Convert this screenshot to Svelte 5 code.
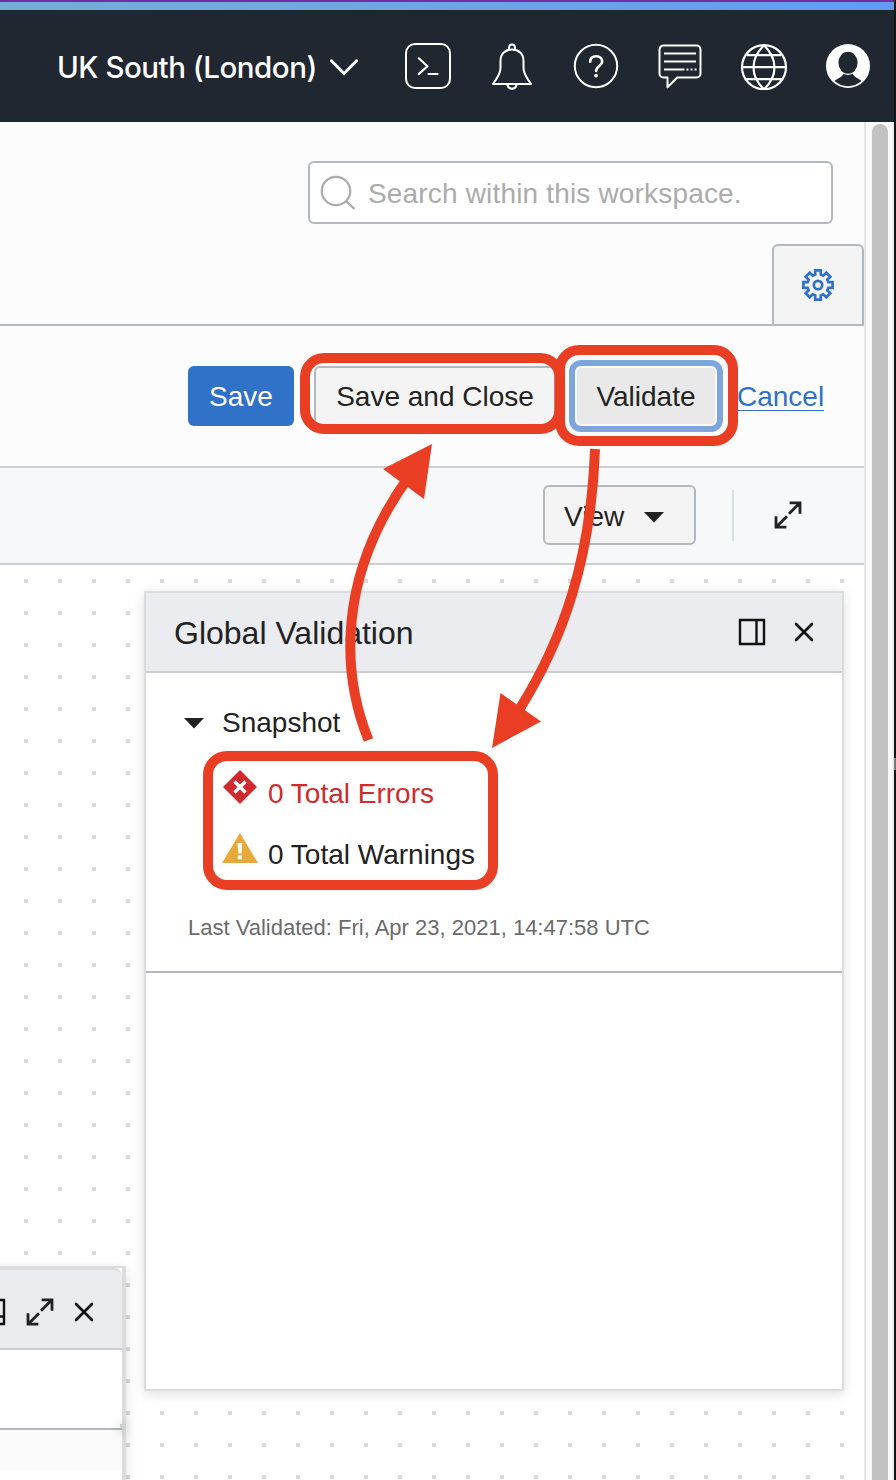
{#snippet expandIcon()}
  <svg width="28" height="28" viewBox="0 0 28 28" fill="none" stroke="#222" stroke-width="2.8">
    <path d="M15.6 1.8H26v11M26 1.8 15 12.8M12.4 26.2H2v-11M2 26.2l11-11" />
  </svg>
{/snippet}

{#snippet closeIcon()}
  <svg width="20" height="20" viewBox="0 0 20 20" fill="none" stroke="#111" stroke-width="2.7" stroke-linecap="round">
    <path d="M2 2l16 16M18 2 2 18" />
  </svg>
{/snippet}

<div class="page">
  <div class="stripe"></div>
  <header>
    <div class="region">
      <span>UK South (London)</span>
      <svg width="28" height="18" viewBox="0 0 28 18" fill="none" stroke="#fff" stroke-width="2.9" stroke-linecap="round" stroke-linejoin="round"><path d="M1.4 2.8 14 15.6 26.6 2.8" /></svg>
    </div>
    <nav>
      <svg viewBox="0 0 48 48" fill="none" stroke="#fff" stroke-width="2" stroke-linecap="round">
        <rect x="2" y="2" width="44" height="44" rx="9" />
        <path d="M14.8 16.3l8.7 7.9-8.7 7.8M24.5 32h9" stroke-width="2.2" stroke-linejoin="round" />
      </svg>
      <svg viewBox="0 0 48 48" fill="none" stroke="#fff" stroke-width="2" stroke-linejoin="round">
        <path d="M5 42c3.4-5.500 7.500-9 7.500-16.500V19c0-7.300 4.900-11.500 11.500-11.500S35.500 11.700 35.500 19v6.500c0 7.500 4.100 11 7.500 16.500z" />
        <path d="M21.100 8V5.500a2.900 2.900 0 0 1 5.800 0V8M19.300 42c.5 3.200 2 4.700 4.700 4.700s4.200-1.500 4.700-4.700" />
      </svg>
      <svg viewBox="0 0 48 48" fill="none" stroke="#fff" stroke-width="2">
        <circle cx="24" cy="24" r="21.200" />
        <path d="M18.200 19.800c0-3.500 2.300-5.600 6-5.600 3.600 0 6 2.100 6 5.200 0 4.600-6.100 4.700-6.100 9.600" stroke-width="2.600" stroke-linecap="round" />
        <circle cx="24.100" cy="33.600" r="1.900" fill="#fff" stroke="none" />
      </svg>
      <svg viewBox="0 0 48 48" fill="none" stroke="#fff" stroke-width="2" stroke-linejoin="round">
        <path d="M7.500 3.500h33a4 4 0 0 1 4 4v24a4 4 0 0 1-4 4H21.200L11.500 45.200v-9.700h-4a4 4 0 0 1-4-4v-24a4 4 0 0 1 4-4z" />
        <path d="M8 11.500h32M8 19.500h32M8 27.500h20.500" />
        <path d="M30.500 27.500h10" stroke-dasharray="2 2" />
      </svg>
      <svg viewBox="0 0 48 48" fill="none" stroke="#fff" stroke-width="2.200">
        <circle cx="24" cy="25.200" r="22" />
        <path d="M24 3.200C10 17 10 34 24 47.200 38 34 38 17 24 3.200M2 25.200h44M7 13.200h34M6 37.200h36" />
      </svg>
      <svg viewBox="0 0 48 48">
        <circle cx="24" cy="24" r="22" fill="#fff" />
        <path d="M10.500 39c3.500-3 7.700-3.600 9.200-7.700h8.800c1.500 4.100 5.500 4.700 9 7.700-8 6.900-19 6.900-27 0z" fill="#202731" />
        <ellipse cx="24" cy="20.700" rx="10.600" ry="12.200" fill="#fff" />
        <ellipse cx="24" cy="20.700" rx="9.600" ry="11" fill="#202731" />
      </svg>
    </nav>
  </header>

  <div class="body">
    <main>
      <section class="top">
        <div class="search">
          <svg width="36" height="36" viewBox="0 0 36 36" fill="none" stroke="#ababab" stroke-width="2.200"><circle cx="16" cy="16" r="14.200" /><path d="M26 26l8.500 8" stroke-width="2.400" /></svg>
          <span>Search within this workspace.</span>
        </div>
        <div class="tab">
          <svg width="32" height="32" viewBox="0 0 32 32" fill="none" stroke="#3072c7" stroke-width="2.700">
            <path d="M13.200 1.400h5.600v4.300l2.500 1 3-3 4 4-3 3 1 2.500h4.300v5.600h-4.300l-1 2.500 3 3-4 4-3-3-2.500 1v4.300h-5.600v-4.300l-2.500-1-3 3-4-4 3-3-1-2.500H1.400v-5.600h4.300l1-2.500-3-3 4-4 3 3 2.500-1z" />
            <circle cx="16" cy="16" r="4.200" />
          </svg>
        </div>
      </section>
      <section class="actions">
        <div class="btn primary"><span>Save</span></div>
        <div class="btn secondary"><span>Save and Close</span></div>
        <div class="btn focused"><span>Validate</span></div>
        <span class="cancel">Cancel</span>
      </section>
      <section class="toolbar">
        <div class="view"><span>View</span><svg width="20" height="11" viewBox="0 0 20 11"><path d="M0 0h20L10 10.500z" fill="#222" /></svg></div>
        <i></i>
        {@render expandIcon()}
      </section>
      <section class="canvas">
        <div class="panel validation">
          <div class="head">
            <span class="title">Global Validation</span>
            <svg width="28" height="28" viewBox="0 0 28 28" fill="none" stroke="#111" stroke-width="2.400"><path d="M2 2h24v24H2zM18.500 2v24" /></svg>
            {@render closeIcon()}
          </div>
          <div class="results">
            <div class="snap"><svg width="20" height="11" viewBox="0 0 20 11"><path d="M0 0h20L10 10.500z" fill="#222" /></svg><span>Snapshot</span></div>
            <div class="line err">
              <svg width="36" height="36" viewBox="0 0 36 36"><path d="M18 1l17 17-17 17L1 18z" fill="#d02a2e" /><path d="M12.500 12.500l11 11m0-11-11 11" stroke="#fff" stroke-width="3.400" /></svg>
              <span>0 Total Errors</span>
            </div>
            <div class="line warn">
              <svg width="36" height="36" viewBox="0 0 36 36"><path d="M18 3l18 30H0z" fill="#e9a83a" /><path d="M15.500 13h4.800l-.8 10.500h-3.200zM15.800 25.500h4.200v3.700h-4.200z" fill="#fff" /></svg>
              <span>0 Total Warnings</span>
            </div>
            <div class="last"><span>Last Validated: Fri, Apr 23, 2021, 14:47:58 UTC</span></div>
          </div>
        </div>
        <div class="panel corner">
          <div class="chead">
            <svg width="28" height="28" viewBox="0 0 28 28" fill="none" stroke="#111" stroke-width="2.400"><path d="M2 2h24v24H2zM2 18.500h24" /></svg>
            {@render expandIcon()}
            {@render closeIcon()}
          </div>
          <div class="cwhite"><b></b></div>
          <div class="cgrey"></div>
        </div>
      </section>
    </main>
    <aside><div class="thumb"></div></aside>
  </div>

  <div class="edge"><b></b></div>

  <svg class="marks" width="896" height="1480" viewBox="0 0 896 1480" fill="none" stroke="#e93e24" stroke-width="10">
    <rect x="305" y="358" width="254.500" height="71" rx="19" />
    <rect x="560" y="350" width="173" height="91" rx="19" />
    <rect x="208" y="756" width="285" height="129" rx="19" />
    <path d="M368.500 740C341 672 338 575 408 478" />
    <path d="M595 449C591 560 563 640 519 710" />
    <path d="M432 444l-49 25 41 30zM492 748l8.500-55 40.500 28.500z" fill="#e93e24" stroke="none" />
  </svg>
</div>

<style>
  :global(body) { margin: 0; }
  .page { position: relative; width: 896px; height: 1480px; overflow: hidden; background: #fcfcfc; font: 28px/32px "Liberation Sans", Arial, sans-serif; color: #222; display: flex; flex-direction: column; }
  .page, .page * { box-sizing: border-box; }
  svg { display: block; flex: none; }
  span { white-space: nowrap; }
  .stripe { height: 10px; flex: none; border-top: 2px solid #702fa0; background: linear-gradient(90deg, #76add2, #6ea5e6 50%, #639bf4); }
  header { height: 112px; flex: none; background: #202731; display: flex; align-items: center; justify-content: space-between; padding: 0 24px 0 57px; }
  .region { display: flex; align-items: center; justify-content: space-between; width: 301px; color: #fff; font: 500 29.500px/36px Inter, "Liberation Sans", sans-serif; padding-top: 1px; }
  .region span { letter-spacing: -.5px; }
  nav { display: flex; gap: 36px; }
  nav svg { width: 48px; height: 48px; }
  .body { display: flex; flex: 1; min-height: 0; }
  main { width: 864px; display: flex; flex-direction: column; }
  .top { height: 204px; flex: none; border-bottom: 2px solid #b4bac1; display: flex; flex-direction: column; align-items: flex-end; padding-top: 39px; }
  .search { width: 525px; height: 63px; flex: none; margin-right: 31px; border: 2px solid #b3b8c0; border-radius: 6px; background: #fff; display: flex; align-items: center; gap: 12px; padding-left: 10px; color: #ababab; }
  .search span { letter-spacing: .17px; padding-top: 3px; }
  .tab { width: 92px; height: 80px; flex: none; margin-top: 20px; border: 2px solid #b3b8c0; border-bottom: 0; border-radius: 6px 6px 0 0; background: #f4f4f4; display: flex; align-items: center; justify-content: center; }
  .actions { height: 142px; flex: none; border-bottom: 2px solid #ccced1; display: flex; align-items: center; padding-left: 188px; }
  .btn { height: 60px; border-radius: 6px; display: flex; align-items: center; justify-content: center; padding-top: 2px; }
  .primary { width: 106px; background: #3072c7; color: #fff; }
  .secondary { width: 242px; margin-left: 20px; border: 2px solid #b3b8c0; background: #f4f4f4; }
  .focused { width: 142px; margin-left: 19px; border: 2px solid #fafafa; background: #e9e9e9; box-shadow: 0 0 0 6px #7fa6dc; }
  .cancel { margin-left: 20px; color: #3072c7; border-bottom: 1px solid #3072c7; line-height: 27px; margin-top: 1px; }
  .toolbar { height: 97px; flex: none; background: #f6f8fa; border-bottom: 2px solid #ccced1; display: flex; align-items: center; padding: 0 0 1px 543px; }
  .view { width: 153px; height: 60px; border: 2px solid #b3b8c0; border-radius: 6px; background: #f4f4f4; display: flex; align-items: center; padding: 3px 0 0 19px; gap: 20px; }
  .view svg { margin-top: 2px; }
  .toolbar i { width: 2px; height: 51px; background: #d5dfe6; margin: 1px 40px 0 36px; }
  .canvas { position: relative; flex: 1; overflow: hidden; background: #fff conic-gradient(from 0deg at 4px 4px, transparent 0 270deg, #d9d9d9 270deg 360deg) 24px 14px / 34px 32px; }
  .panel { position: absolute; background: #fff; border: 2px solid #dcdcdc; box-shadow: 0 3px 12px rgba(0, 0, 0, .13); }
  .validation { left: 144px; top: 26px; width: 700px; height: 800px; }
  .head { height: 80px; background: #ebecf0; border-bottom: 2px solid #c9ccd1; display: flex; align-items: center; padding: 0 28px; }
  .title { font-size: 32px; flex: 1; padding-top: 2px; }
  .head svg + svg { margin-left: 28px; }
  .results { height: 300px; border-bottom: 2px solid #b3b8c0; padding: 34px 0 0 38px; display: flex; flex-direction: column; }
  .snap { display: flex; align-items: center; gap: 18px; height: 32px; }
  .line { display: flex; margin-left: 38px; gap: 10px; height: 36px; }
  .line span { padding-top: 9px; }
  .err { margin-top: 30px; color: #d02a2e; }
  .warn { margin-top: 25px; }
  .last { margin: 49px 0 0 4px; font-size: 22px; line-height: 26px; color: #6b6b6b; }
  .corner { left: -200px; top: 701px; width: 326px; height: 300px; border-right-width: 4px; }
  .chead { height: 82px; border-top: 2px solid #dcdcdc; border-bottom: 2px solid #c9ccd1; border-radius: 0 8px 0 0; background: #ebecf0; display: flex; align-items: center; justify-content: flex-end; gap: 20px; padding: 6px 28px 0 0; }
  .cwhite { height: 80px; border-bottom: 2px solid #b3b8c0; display: flex; align-items: flex-end; justify-content: flex-end; }
  .cwhite b { width: 4px; height: 4px; margin-right: -2px; background: #cfcfcf; box-shadow: 0 2px 10px 4px rgba(0, 0, 0, .08); }
  .cgrey { height: 40px; background: #fbfbfb; }
  aside { width: 30px; flex: none; border-left: 2px solid #e5e5e5; border-right: 2px solid #ededed; background: #fafafa; display: flex; padding: 2px 0 0 6px; }
  .thumb { width: 16px; background: #c2c2c2; border-radius: 8px 8px 0 0; }
  .edge { position: absolute; right: 0; top: 0; width: 2px; height: 1480px; background: #151515; }
  .edge b { display: block; margin-top: 758px; width: 2px; height: 12px; background: #777; }
  .marks { position: absolute; left: 0; top: 0; }
</style>
